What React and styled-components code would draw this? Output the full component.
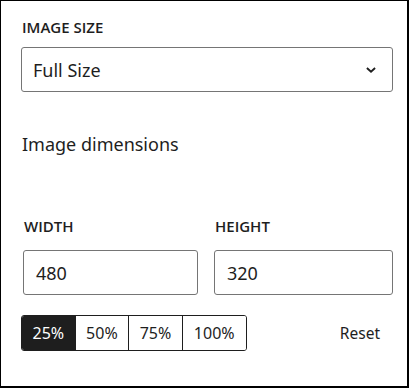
import React, { useState } from 'react';
import styled, { createGlobalStyle } from 'styled-components';

const GlobalStyle = createGlobalStyle`
  html, body {
    margin: 0;
    padding: 0;
    background: #fff;
  }
  body {
    font-family: "Noto Sans", "Open Sans", sans-serif;
    color: #1e1e1e;
  }
`;

const Panel = styled.div`
  box-sizing: border-box;
  width: 409px;
  height: 388px;
  border-style: solid;
  border-color: #000;
  border-width: 1px 2px 2px 1px;
  padding: 16px 14px 0 20px;
  display: flex;
  flex-direction: column;
`;

const Label = styled.div`
  font-family: "Open Sans", "Noto Sans", sans-serif;
  font-size: 15px;
  font-weight: 600;
  text-transform: uppercase;
  line-height: 20px;
  padding-left: 1px;
`;

const SelectBox = styled.div`
  box-sizing: border-box;
  margin-top: 10px;
  height: 45px;
  width: 372px;
  border: 1px solid #757575;
  border-radius: 3px;
  display: flex;
  align-items: center;
  justify-content: space-between;
  padding: 0 14px 0 11px;
  font-size: 18px;
`;

const Heading = styled.div`
  margin-top: 40px;
  font-size: 18px;
  line-height: 24px;
  padding-left: 1px;
`;

const DimRow = styled.div`
  margin-top: 60px;
  display: flex;
  gap: 16px;
  padding-left: 2px;
`;

const Field = styled.div`
  display: flex;
  flex-direction: column;
  gap: 14px;
  width: ${(p) => p.$w}px;
`;

const NumberInput = styled.div`
  box-sizing: border-box;
  height: 45px;
  border: 1px solid #757575;
  border-radius: 3px;
  display: flex;
  align-items: center;
  padding: 0 12px;
  font-size: 18px;
`;

const Controls = styled.div`
  margin-top: 20px;
  display: flex;
  align-items: center;
  justify-content: space-between;
  padding-right: 13px;
`;

const Group = styled.div`
  display: flex;
  border: 1px solid #1e1e1e;
  border-radius: 3px;
  overflow: hidden;
`;

const SizeButton = styled.button`
  box-sizing: border-box;
  height: 34px;
  padding: 0 ${(p) => (p.$wide ? 11 : 10.5)}px;
  border: none;
  border-left: ${(p) => (p.$first ? 'none' : '1.5px solid #1e1e1e')};
  background: ${(p) => (p.$active ? '#1e1e1e' : '#fff')};
  color: ${(p) => (p.$active ? '#fff' : '#1e1e1e')};
  font-family: inherit;
  font-size: 16px;
  cursor: pointer;
`;

const ResetButton = styled.button`
  border: none;
  background: none;
  padding: 0;
  font-family: inherit;
  font-size: 15.5px;
  color: #1e1e1e;
  cursor: pointer;
`;

const Chevron = () => (
  <svg width="14" height="14" viewBox="0 0 24 24" fill="none">
    <path d="M5 8.5l7 6.5 7-6.5" stroke="#1e1e1e" strokeWidth="3.2" />
  </svg>
);

const sizes = ['25%', '50%', '75%', '100%'];

export default function App() {
  const [active, setActive] = useState('25%');
  return (
    <>
      <GlobalStyle />
      <Panel>
        <Label>Image size</Label>
        <SelectBox>
          <span>Full Size</span>
          <Chevron />
        </SelectBox>
        <Heading>Image dimensions</Heading>
        <DimRow>
          <Field $w={176}>
            <Label>Width</Label>
            <NumberInput>480</NumberInput>
          </Field>
          <Field $w={180}>
            <Label>Height</Label>
            <NumberInput>320</NumberInput>
          </Field>
        </DimRow>
        <Controls>
          <Group>
            {sizes.map((s, i) => (
              <SizeButton
                key={s}
                $first={i === 0}
                $wide={s === '100%'}
                $active={active === s}
                onClick={() => setActive(s)}
              >
                {s}
              </SizeButton>
            ))}
          </Group>
          <ResetButton>Reset</ResetButton>
        </Controls>
      </Panel>
    </>
  );
}
